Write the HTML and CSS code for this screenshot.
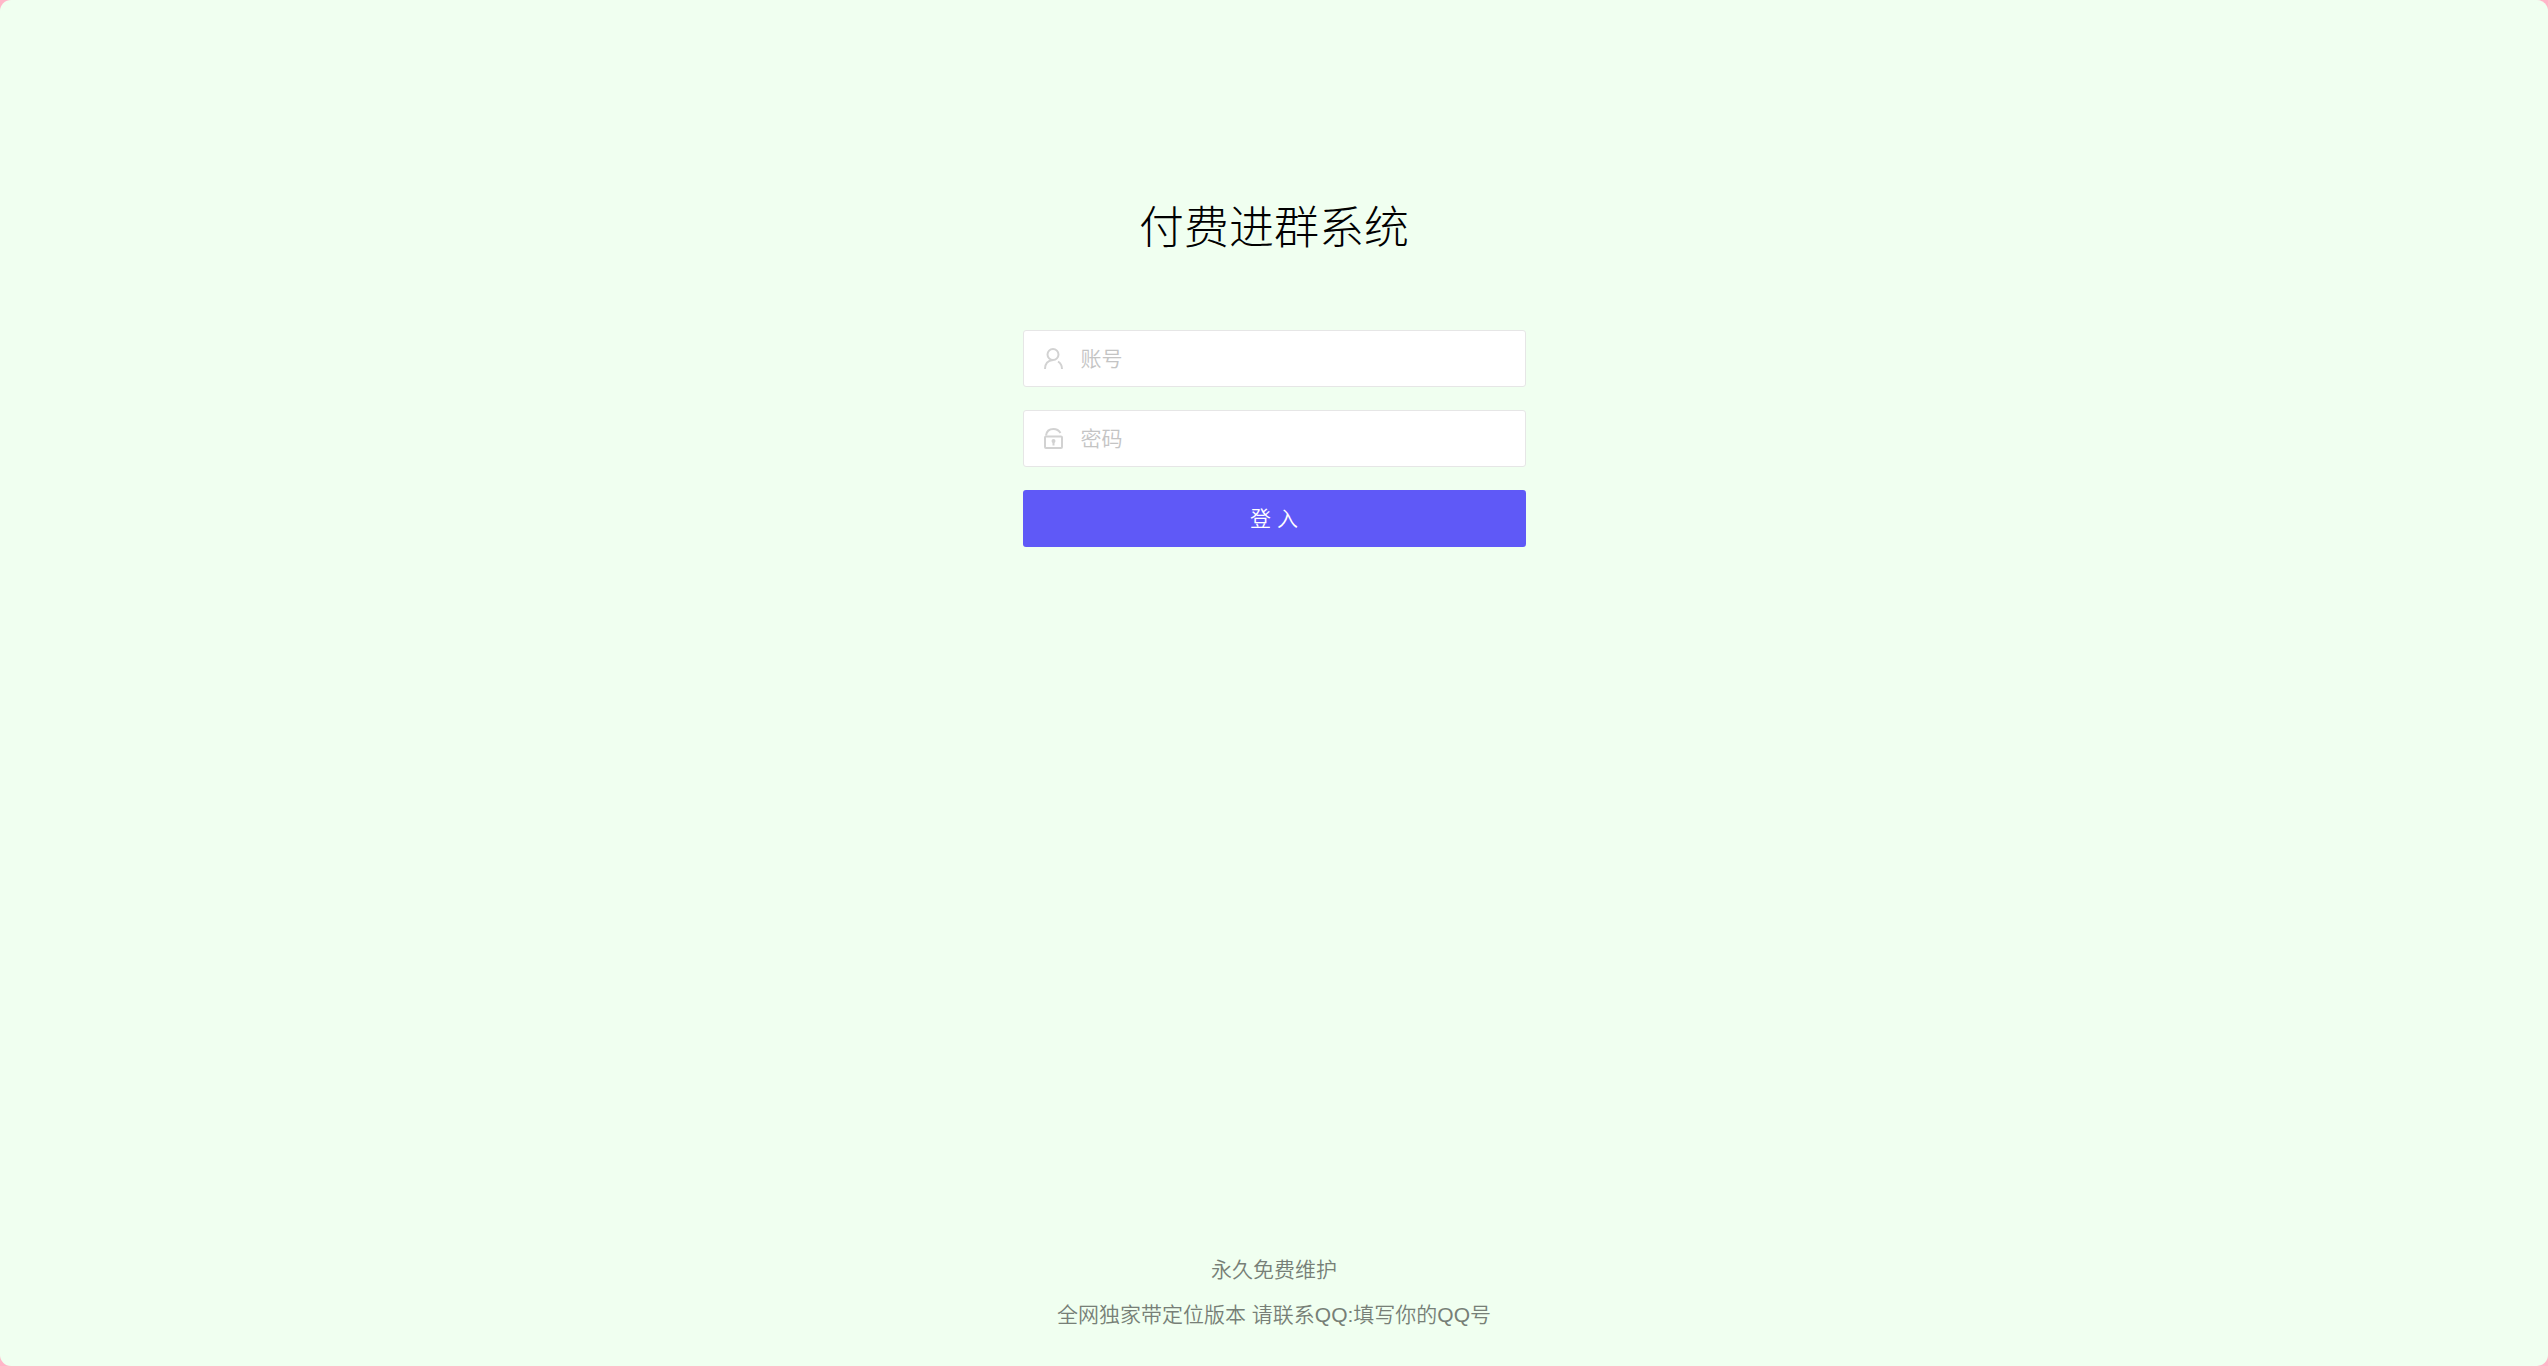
FILE: index.html
```html
<!DOCTYPE html>
<html lang="zh-CN">
<head>
<meta charset="utf-8">
<meta name="viewport" content="width=device-width, initial-scale=1">
<title>付费进群系统</title>
<link rel="stylesheet" href="styles.css">
</head>
<body>
<div class="page">
  <main class="login">
    <h1 class="title">付费进群系统</h1>
    <form class="form">
      <div class="field">
        <label class="field-icon" for="username" aria-label="账号">
          <svg viewBox="0 0 24 24" width="24" height="24" aria-hidden="true"><circle cx="12" cy="7.500" r="5.500"/><path d="M4 22c0-5 3-8.500 8-9M17 14.500c2.500 1.500 4 4 4 7.500"/></svg>
        </label>
        <input class="input" id="username" type="text" placeholder="账号">
      </div>
      <div class="field">
        <label class="field-icon" for="password" aria-label="密码">
          <svg viewBox="0 0 24 24" width="24" height="24" aria-hidden="true"><rect x="4" y="9.500" width="17" height="11.500" rx="1"/><path d="M5 8.500C5.500 4.500 8.500 2 12.500 2c3 0 5.500 1.500 7 4M12.500 14v4.500"/><circle class="keyhole" cx="12.500" cy="14" r="2"/></svg>
        </label>
        <input class="input" id="password" type="password" placeholder="密码">
      </div>
      <button class="submit" type="button">登 入</button>
    </form>
  </main>
  <footer class="footer">
    <p>永久免费维护</p>
    <p>全网独家带定位版本 请联系QQ:填写你的QQ号</p>
  </footer>
</div>
</body>
</html>
```
FILE: styles.css
```css
* {
  box-sizing: border-box;
}

body {
  margin: 0;
  background: #ffb6c8;
  font-family: "Liberation Sans", "Noto Sans CJK SC", sans-serif;
  font-size: 21px;
  font-weight: 350;
}

.page {
  display: flex;
  flex-direction: column;
  justify-content: space-between;
  align-items: center;
  min-height: 100vh;
  padding: 169px 24px 29px;
  border-radius: 11px;
  background: #f0fff0;
}

.login {
  width: 100%;
  max-width: 503px;
}

.title {
  margin: 0 0 41px;
  font-size: 45px;
  font-weight: 300;
  line-height: 120px;
  text-align: center;
  color: #000;
}

.form {
  display: flex;
  flex-direction: column;
  gap: 23px;
}

.field {
  position: relative;
}

.field-icon {
  position: absolute;
  top: 0;
  left: 0;
  display: flex;
  align-items: center;
  justify-content: center;
  width: 60px;
  height: 100%;
}

.field-icon svg {
  fill: none;
  stroke: #d2d2d2;
  stroke-width: 2;
}

.field-icon .keyhole {
  fill: #d2d2d2;
  stroke: none;
}

.input {
  display: block;
  width: 100%;
  height: 57px;
  padding: 0 15px 0 57px;
  border: 1px solid #e6e6e6;
  border-radius: 3px;
  background: #fff;
  font: inherit;
  color: #333;
}

.input::placeholder {
  color: #c4c4c4;
  opacity: 1;
}

.submit {
  height: 57px;
  padding: 0 27px 3px;
  border: 0;
  border-radius: 3px;
  background: #5f59f7;
  font: inherit;
  color: #fff;
  cursor: pointer;
}

.footer {
  line-height: 45px;
  text-align: center;
  color: #777f77;
}

.footer p {
  margin: 0;
}
```
